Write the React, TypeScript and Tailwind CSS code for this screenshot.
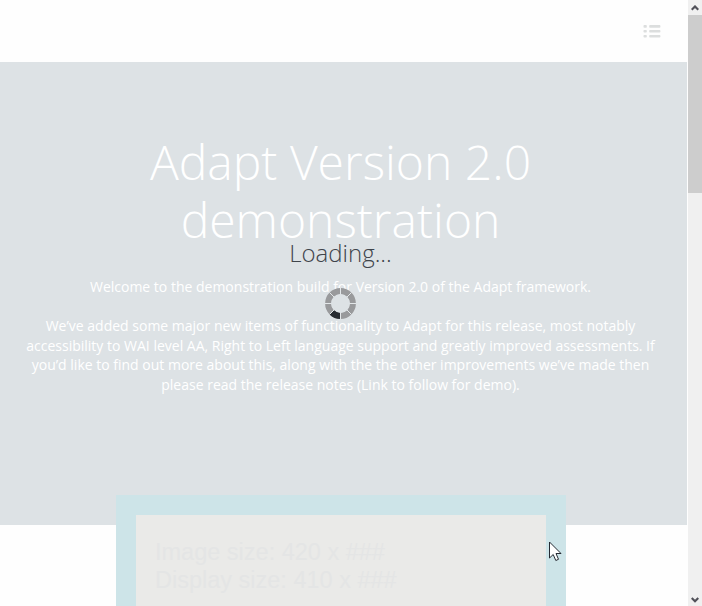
function Spinner() {
  return (
    <svg className="absolute left-[325px] top-[288px]" width="31" height="31" viewBox="0 0 31 31">
      <circle cx="15.5" cy="15.5" r="12.4" fill="none" stroke="#999a9c" strokeWidth="6" />
      <path d="M15.5 31A15.5 15.5 0 0 1 4.54 26.46L9.1 21.9A9.2 9.2 0 0 0 15.5 24.7Z" fill="#272b31" />
      <path d="M15.5 0V31M0 15.5H31M4.5 4.5L26.5 26.5M26.5 4.5L4.5 26.5" stroke="#e3e7e9" strokeWidth="1" />
      <circle cx="15.5" cy="15.5" r="9.2" fill="#dde2e5" />
    </svg>
  );
}

function MenuIcon() {
  return (
    <svg width="18" height="14" viewBox="0 0 18 14" fill="#dcdede">
      {[1.1, 6, 10.9].map((y) => (
        <g key={y}>
          <rect x="0.5" y={y} width="3.3" height="2.6" rx="0.8" />
          <rect x="6.2" y={y} width="11.2" height="2.6" rx="0.8" />
        </g>
      ))}
    </svg>
  );
}

function Scrollbar() {
  return (
    <aside className="flex h-full w-[14px] flex-col bg-[#f0f0f0]">
      <div className="flex h-[15px] items-center justify-center">
        <svg width="8" height="6" viewBox="0 0 8 6" fill="none" stroke="#505058" strokeWidth="2.2">
          <path d="M.7 4.8L4 1.5L7.3 4.8" />
        </svg>
      </div>
      <div className="h-[178px] bg-[#cdcdcd]" />
      <div className="mt-auto flex h-[13px] items-center justify-center">
        <svg width="8" height="6" viewBox="0 0 8 6" fill="none" stroke="#505058" strokeWidth="2.2">
          <path d="M.7 1L4 4.3L7.3 1" />
        </svg>
      </div>
    </aside>
  );
}

export default function App() {
  return (
    <div className="relative flex h-[606px] w-[702px] overflow-hidden bg-[#fefefe] font-['Open_Sans',sans-serif]">
      <main className="mr-px flex w-[687px] flex-col">
        <header className="flex h-[62px] items-center justify-end pr-[26px]">
          <MenuIcon />
        </header>
        <section className="h-[463px] shrink-0 bg-[#dde2e5] pr-[6px] pt-[71px] text-center text-white">
          <h1 className="text-[48px] font-light leading-[58px]">
            Adapt Version 2.0
            <br />
            demonstration
          </h1>
          <div className="mt-[28px] whitespace-nowrap text-[14px] leading-[19.6px]">
            <p>Welcome to the demonstration build for Version 2.0 of the Adapt framework.</p>
            <p className="mt-[19.6px]">
              We’ve added some major new items of functionality to Adapt for this release, most notably
              <br />
              accessibility to WAI level AA, Right to Left language support and greatly improved assessments. If
              <br />
              you’d like to find out more about this, along with the the other improvements we’ve made then
              <br />
              please read the release notes (Link to follow for demo).
            </p>
          </div>
        </section>
        <section className="ml-[116px] mt-[-30px] h-[111px] w-[450px] shrink-0 bg-[#cde4e8] px-5 pt-5">
          <div className="h-full bg-[#eaeae8] pl-[19px] pt-[23px] font-['Liberation_Sans',sans-serif] text-[23.5px] leading-[28px] text-[#e4e5e5]">
            <p>Image size: 420 x ###</p>
            <p>Display size: 410 x ###</p>
          </div>
        </section>
      </main>
      <Scrollbar />
      <p className="absolute left-0 top-[237px] w-[681px] text-center text-[24px] font-light leading-[32px] text-[#3f444b]">
        Loading...
      </p>
      <Spinner />
      <svg className="absolute left-[549px] top-[541px]" width="13" height="21" viewBox="0 0 13 21">
        <path d="M.5 1V17L4.2 13.5L6.8 19.5L9.5 18.3L7 12.5H12Z" fill="#fff" stroke="#252a33" />
      </svg>
    </div>
  );
}
